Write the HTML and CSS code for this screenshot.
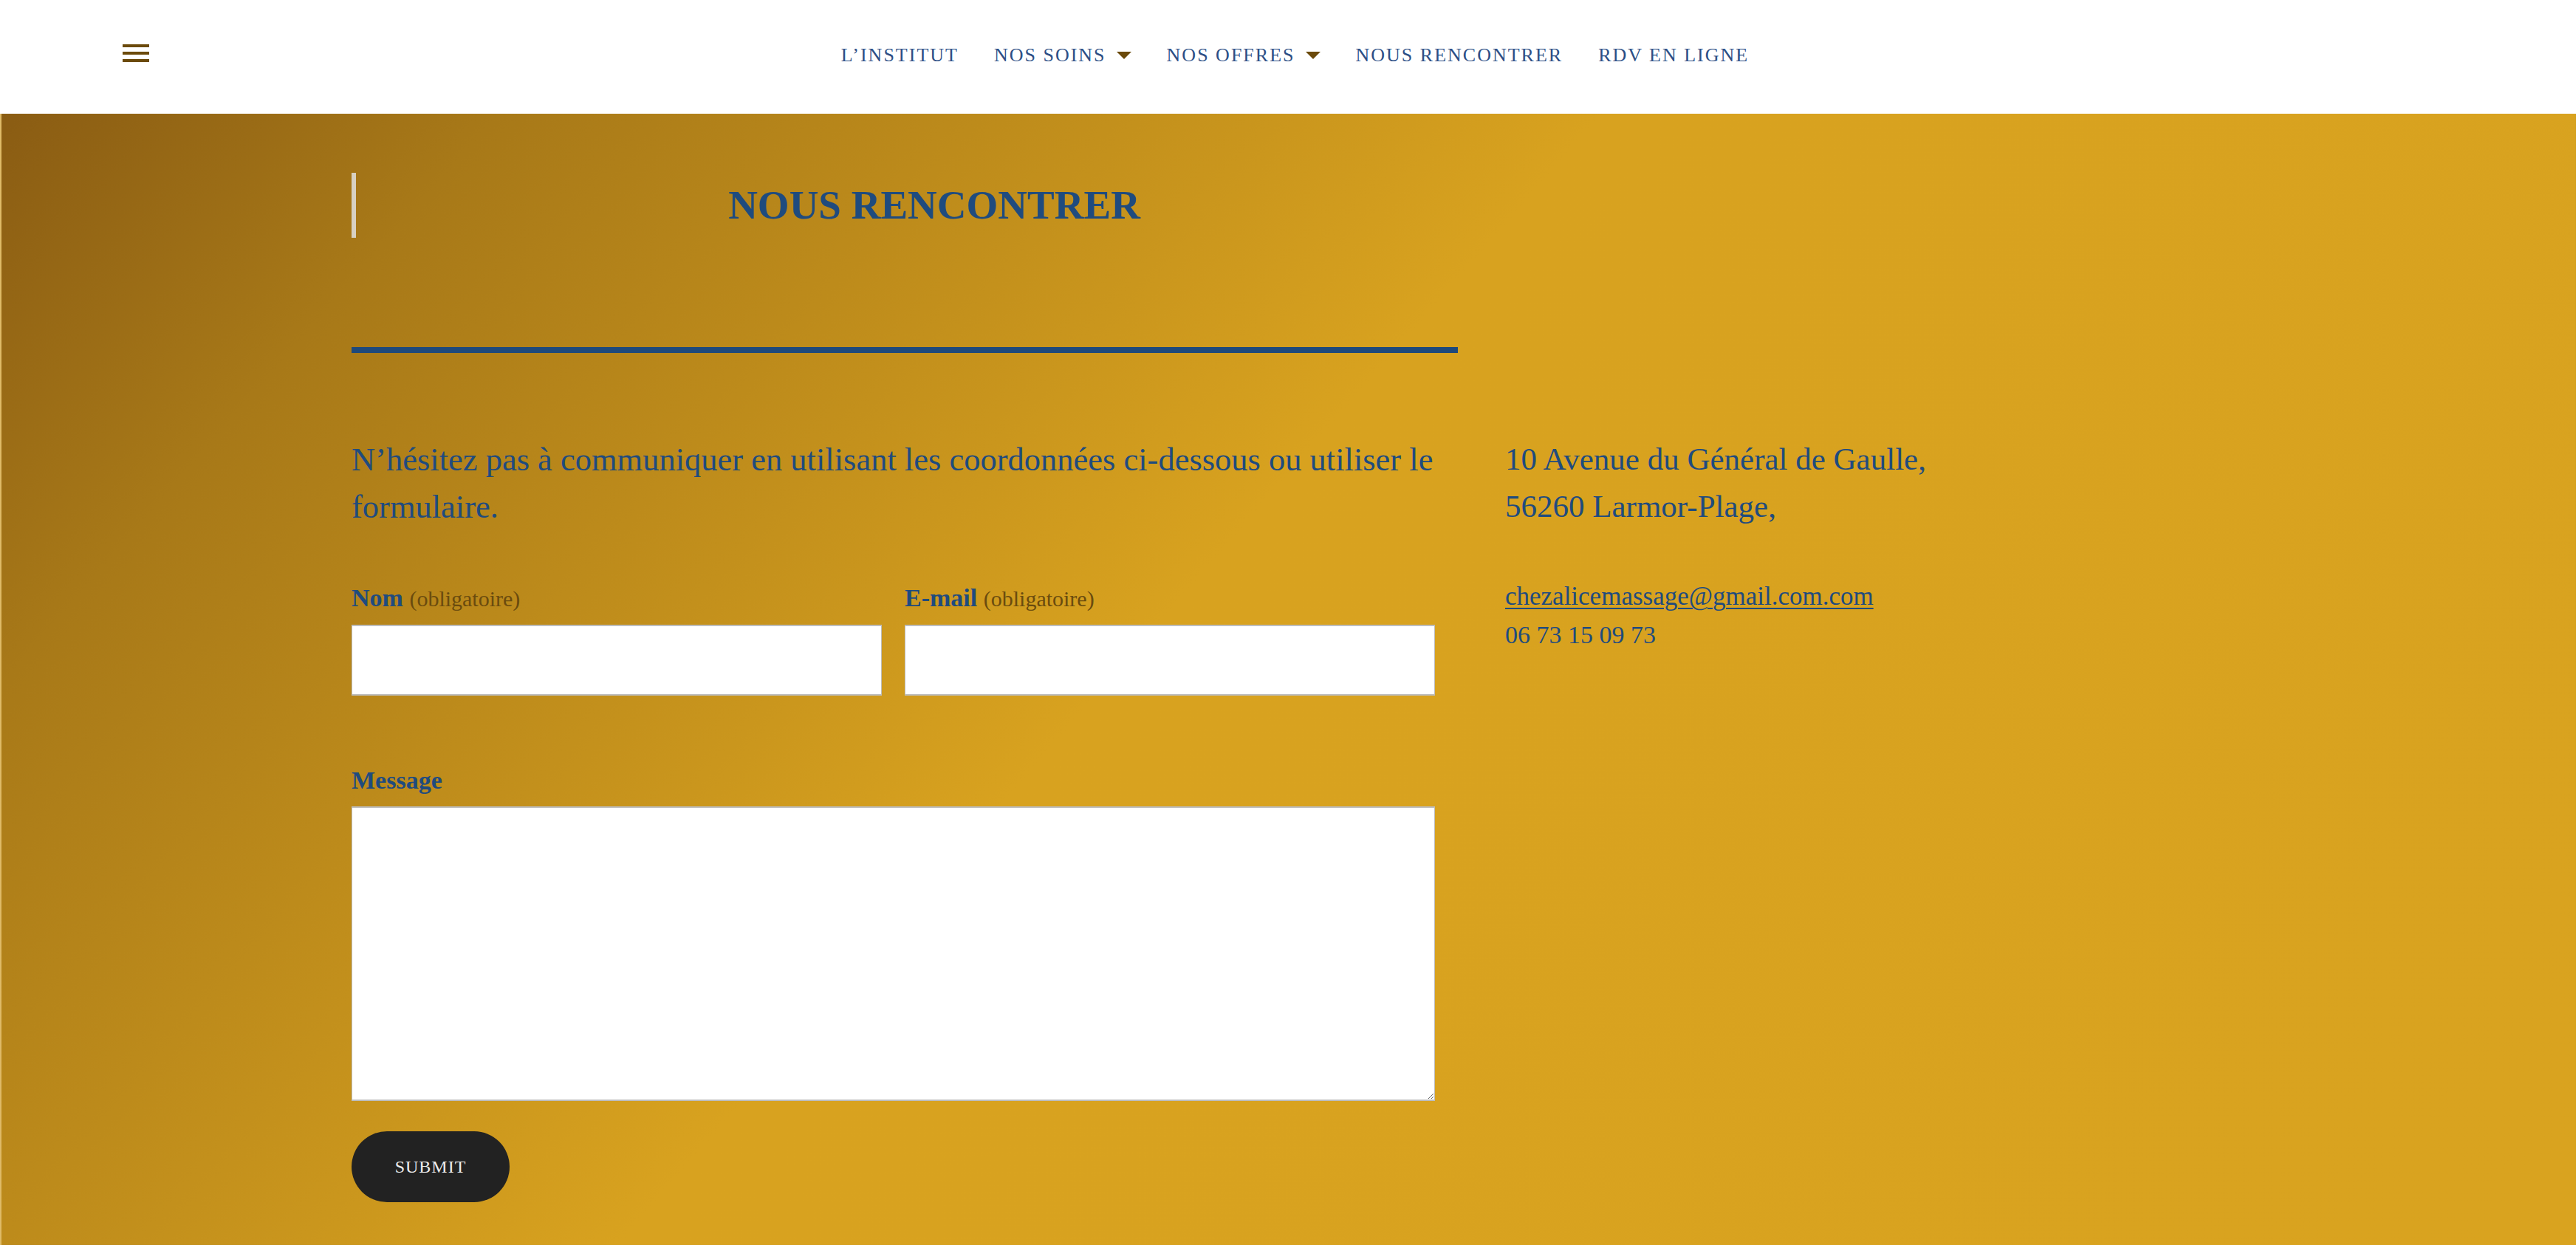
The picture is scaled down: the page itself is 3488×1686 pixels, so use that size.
FILE: index.html
```html
<!DOCTYPE html>
<html lang="fr">
<head>
<meta charset="utf-8">
<title>Nous rencontrer</title>
<link rel="stylesheet" href="styles.css">
</head>
<body>
<header class="site-header">
  <div class="header-left">
    <button class="burger" aria-label="Menu"><span></span><span></span><span></span></button>
  </div>
  <nav class="main-nav">
    <a href="#">L’INSTITUT</a>
    <a href="#" class="has-sub">NOS SOINS<span class="caret"></span></a>
    <a href="#" class="has-sub">NOS OFFRES<span class="caret"></span></a>
    <a href="#">NOUS RENCONTRER</a>
    <a href="#">RDV EN LIGNE</a>
  </nav>
  <div class="header-right"></div>
</header>
<main class="contact">
  <div class="contact-inner">
    <div class="title-box"><h1>NOUS RENCONTRER</h1></div>
    <div class="rule"></div>
    <div class="columns">
      <div class="col-left">
        <p class="intro">N’hésitez pas à communiquer en utilisant les coordonnées ci-dessous ou utiliser le formulaire.</p>
        <form class="form">
          <div class="row-2">
            <div class="field">
              <label class="label">Nom <span class="req">(obligatoire)</span></label>
              <input class="input" type="text">
            </div>
            <div class="field">
              <label class="label">E-mail <span class="req">(obligatoire)</span></label>
              <input class="input" type="email">
            </div>
          </div>
          <div class="field message">
            <label class="label">Message</label>
            <textarea class="textarea"></textarea>
          </div>
          <button type="button" class="submit">SUBMIT</button>
        </form>
      </div>
      <div class="col-right">
        <p class="address">10 Avenue du Général de Gaulle,<br>56260 Larmor-Plage,</p>
        <p class="contact-lines"><a href="#" class="mail">chezalicemassage@gmail.com.com</a><br><span class="phone">06 73 15 09 73</span></p>
      </div>
    </div>
  </div>
</main>
</body>
</html>
```
FILE: styles.css
```css
* { box-sizing: border-box; }

html, body {
  margin: 0;
  padding: 0;
}

body {
  font-family: "Liberation Serif", "Times New Roman", serif;
  background: #ffffff;
  color: #1f4b7e;
}

.site-header {
  height: 154px;
  display: grid;
  grid-template-columns: 1fr auto 1fr;
  align-items: center;
  padding-bottom: 4px;
  background: #ffffff;
}

.header-left {
  padding-left: 166px;
  display: flex;
  align-items: center;
}

.burger {
  width: 36px;
  height: 24px;
  padding: 0;
  border: 0;
  background: transparent;
  display: flex;
  flex-direction: column;
  justify-content: space-between;
  margin-bottom: 6px;
}

.burger span {
  display: block;
  height: 4px;
  width: 36px;
  background: #6b4a0b;
}

.main-nav {
  display: flex;
  align-items: center;
  gap: 48px;
  margin-left: 19px;
}

.main-nav a {
  display: flex;
  align-items: center;
  font-size: 26px;
  line-height: 26px;
  letter-spacing: 2px;
  color: #2d4f86;
  text-decoration: none;
  white-space: nowrap;
}

.caret {
  display: inline-block;
  width: 0;
  height: 0;
  margin-left: 14px;
  border-left: 10px solid transparent;
  border-right: 10px solid transparent;
  border-top: 10px solid #6b4a0b;
}

.contact {
  min-height: 1532px;
  background: linear-gradient(131deg, #8a5c13 0%, #a87918 14%, #d8a21f 45%, #d9a31f 100%);
  border-left: 2px solid rgba(230, 215, 190, 0.45);
  padding: 80px 0 40px 474px;
}

.title-box {
  width: 1572px;
  height: 88px;
  border-left: 6px solid rgba(225, 225, 225, 0.85);
  display: flex;
  align-items: center;
  justify-content: center;
}

.title-box h1 {
  margin: 0;
  font-size: 55px;
  line-height: 56px;
  font-weight: 700;
  color: #1f4b7e;
}

.rule {
  width: 1498px;
  height: 8px;
  margin-top: 148px;
  background: #1e497b;
}

.columns {
  display: flex;
  gap: 64px;
  margin-top: 112px;
}

.col-left {
  width: 1498px;
  flex: none;
}

.intro {
  margin: 0;
  font-size: 44.5px;
  line-height: 64px;
  color: #1f4b7e;
}

.form {
  width: 1467px;
  margin-top: 72px;
}

.row-2 {
  display: grid;
  grid-template-columns: 1fr 1fr;
  gap: 31px;
}

.label {
  display: block;
  font-size: 34px;
  line-height: 40px;
  font-weight: 700;
  color: #1f4b7e;
  margin-bottom: 15px;
}

.req {
  font-size: 30px;
  font-weight: 400;
  color: #6a4b0e;
}

.input {
  display: block;
  width: 100%;
  height: 96px;
  background: #ffffff;
  border: 1px solid #bdbdbd;
  border-top-width: 2px;
  border-bottom-width: 2px;
  border-radius: 0;
  margin: 0;
  font-family: inherit;
  font-size: 30px;
}

.message {
  margin-top: 95px;
}

.textarea {
  display: block;
  width: 100%;
  height: 399px;
  background: #ffffff;
  border: 1px solid #bdbdbd;
  border-top-width: 2px;
  border-bottom-width: 2px;
  border-radius: 0;
  margin: 0;
  font-family: inherit;
  font-size: 30px;
}

.submit {
  display: block;
  margin-top: 41px;
  width: 214px;
  height: 96px;
  border: 0;
  border-radius: 48px;
  background: #222222;
  color: #eeeeee;
  font-family: "Liberation Serif", "Times New Roman", serif;
  font-size: 24px;
  letter-spacing: 1px;
  padding: 0;
}

.col-right {
  flex: 1;
}

.address {
  margin: 0;
  font-size: 43px;
  line-height: 64px;
  color: #1f4b7e;
}

.contact-lines {
  margin: 64px 0 0;
  font-size: 34px;
  line-height: 52px;
  color: #1f4b7e;
}

.mail {
  font-size: 35px;
  color: #1f4b7e;
  text-decoration: underline;
  text-decoration-thickness: 2px;
  text-underline-offset: 4px;
}
```
